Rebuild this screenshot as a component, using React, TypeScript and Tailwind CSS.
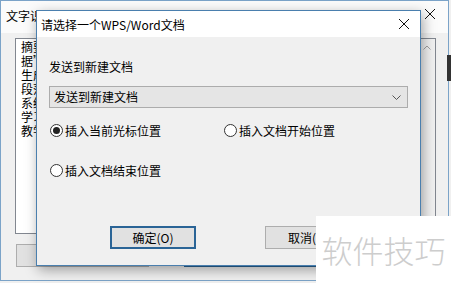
import React from "react";

const font = { fontFamily: '"Microsoft YaHei", "Noto Sans CJK SC", "Noto Sans", sans-serif' };

function CloseX({ className = "" }: { className?: string }) {
  return (
    <svg width="12" height="12" viewBox="0 0 12 12" className={className}>
      <path d="M1 1 L11 11 M11 1 L1 11" stroke="#111" strokeWidth="1" fill="none" />
    </svg>
  );
}

function Radio({ checked, label }: { checked?: boolean; label: string }) {
  return (
    <div className="flex items-center gap-[2px]">
      <span className="w-[13px] h-[13px] rounded-full border border-[#333] bg-white flex items-center justify-center">
        {checked && <span className="w-[7px] h-[7px] rounded-full bg-[#222]" />}
      </span>
      <span className="text-[12px] text-black leading-none">{label}</span>
    </div>
  );
}

export default function App() {
  const lines = ["摘要", "据”", "生成", "段落", "系统", "学习", "教学"];
  return (
    <div className="relative w-[451px] h-[283px] overflow-hidden bg-[#f0f0f0]" style={font}>
      {/* background window */}
      <div className="absolute left-0 top-0 w-[449px] h-[281px] border border-[#7ba3c8] bg-[#f0f0f0] flex flex-col">
        <div className="h-[32px] bg-[#fbfbfb] flex items-start justify-between pl-[5px] pr-[12px] pt-[6px]">
          <span className="text-[12px] text-black">文字识别结果</span>
          <CloseX className="mt-[1px]" />
        </div>
        <div className="ml-[14px] mt-[5px] w-[421px] h-[196px] bg-white border border-[#828790] flex">
          <div className="flex-1 pl-[5px] pt-[1px] flex flex-col text-[12px] leading-[14px] text-black">
            {lines.map((l) => (
              <span key={l}>{l}</span>
            ))}
          </div>
          <div className="w-[16px] bg-[#f0f0f0] flex justify-center pt-[6px]">
            <svg width="8" height="5" viewBox="0 0 8 5">
              <path d="M0.5 4.5 L4 1 L7.5 4.5" stroke="#a0a0a0" fill="none" />
            </svg>
          </div>
        </div>
        <div className="flex mt-[10px] ml-[15px] gap-[35px]">
          <div className="w-[133px] h-[23px] bg-[#e1e1e1] border border-[#adadad]" />
          <div className="w-[180px] h-[23px] bg-[#e1e1e1] border-2 border-[#2a6496]" />
        </div>
      </div>
      <div className="absolute right-0 top-[55px] w-[4px] h-[26px] bg-[#333]" />

      {/* dialog */}
      <div className="absolute left-[36px] top-[10px] w-[385px] h-[256px] border border-[#4a7fae] bg-[#f0f0f0] shadow-[2px_4px_12px_rgba(0,0,0,0.35)] flex flex-col">
        <div className="h-[26px] bg-white flex items-center justify-between pl-[4px] pr-[10px]">
          <span className="text-[12px] text-black mt-[1px]">请选择一个WPS/Word文档</span>
          <CloseX />
        </div>
        <div className="flex flex-col pl-[12px] pr-[12px]">
          <span className="mt-[24px] text-[12px] leading-none text-black">发送到新建文档</span>
          <div className="mt-[13px] w-[359px] h-[22px] bg-[#e5e5e5] border border-[#acacac] flex items-center justify-between pl-[4px] pr-[6px]">
            <span className="text-[12px] text-black">发送到新建文档</span>
            <svg width="9" height="5" viewBox="0 0 9 5">
              <path d="M0.5 0.5 L4.5 4.5 L8.5 0.5" stroke="#555" fill="none" />
            </svg>
          </div>
          <div className="mt-[16px] ml-[1px] flex">
            <div className="w-[174px]">
              <Radio checked label="插入当前光标位置" />
            </div>
            <Radio label="插入文档开始位置" />
          </div>
          <div className="mt-[27px] ml-[1px]">
            <Radio label="插入文档结束位置" />
          </div>
          <div className="mt-[49px] flex ml-[61px] gap-[69px]">
            <button className="w-[86px] h-[23px] bg-[#e1e1e1] border-2 border-[#2a6496] text-[12px] text-black flex items-center justify-center">
              确定(O)
            </button>
            <button className="w-[86px] h-[23px] bg-[#e1e1e1] border border-[#adadad] text-[12px] text-black flex items-center justify-center">
              取消(C)
            </button>
          </div>
        </div>
      </div>

      {/* watermark */}
      <div className="absolute left-[316px] top-[216px] w-[135px] h-[67px] bg-white flex items-center justify-center">
        <span className="text-[31px] leading-none font-light text-[#cdcdcd]">软件技巧</span>
      </div>
    </div>
  );
}
